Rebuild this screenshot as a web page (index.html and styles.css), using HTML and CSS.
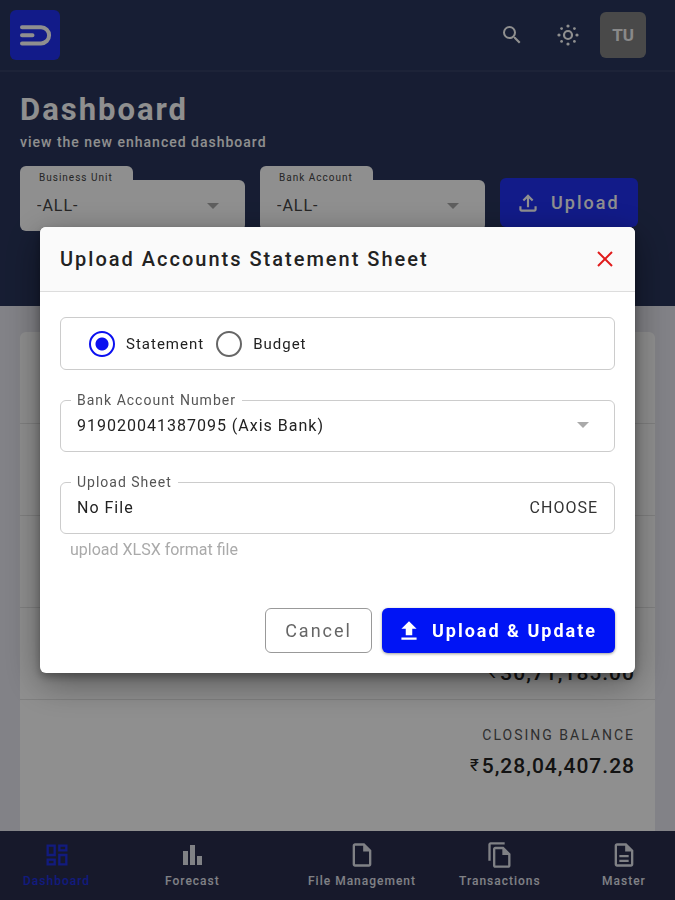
FILE: index.html
```html
<!DOCTYPE html>
<html lang="en">
<head>
<meta charset="utf-8">
<meta name="viewport" content="width=device-width, initial-scale=1">
<title>Dashboard</title>
<link rel="stylesheet" href="styles.css">
</head>
<body>
<div class="app">
  <header class="topbar">
    <a class="logo" href="#" aria-label="Home">
      <svg width="50" height="50" viewBox="0 0 50 50" fill="none" stroke="currentColor" stroke-width="4" stroke-linecap="round"><path d="M12 17.200H31a8 8 0 0 1 0 16.200H12M12 25.300H22.500"/></svg>
    </a>
    <div class="tools">
      <button class="tool" type="button" aria-label="Search">
        <svg width="24" height="24" viewBox="0 0 24 24" fill="currentColor"><path d="M15.500 14h-.79l-.28-.27A6.470 6.470 0 0 0 16 9.500 6.500 6.500 0 1 0 9.500 16c1.610 0 3.090-.59 4.230-1.570l.27.28v.79l5 4.990L20.490 19l-4.990-5zm-6 0C7.010 14 5 11.990 5 9.500S7.010 5 9.500 5 14 7.010 14 9.500 11.990 14 9.500 14z"/></svg>
      </button>
      <button class="tool" type="button" aria-label="Theme">
        <svg width="24" height="24" viewBox="0 0 24 24" fill="currentColor"><circle cx="12" cy="12" r="4" fill="none" stroke="currentColor" stroke-width="2.200"/><circle cx="12" cy="3" r="1.600"/><circle cx="12" cy="21" r="1.600"/><circle cx="3" cy="12" r="1.600"/><circle cx="21" cy="12" r="1.600"/><circle cx="5.600" cy="5.600" r="1.400"/><circle cx="18.400" cy="5.600" r="1.400"/><circle cx="5.600" cy="18.400" r="1.400"/><circle cx="18.400" cy="18.400" r="1.400"/></svg>
      </button>
      <button class="avatar" type="button">TU</button>
    </div>
  </header>
  <section class="hero">
    <h1>Dashboard</h1>
    <p>view the new enhanced dashboard</p>
    <div class="filters">
      <div class="filter">
        <label for="unit">Business Unit</label>
        <div class="filter-box">
          <select id="unit"><option>-ALL-</option></select>
          <svg class="caret" width="12" height="6" viewBox="0 0 12 6"><path d="M0 0h12L6 6z" fill="currentColor"/></svg>
        </div>
      </div>
      <div class="filter">
        <label for="account">Bank Account</label>
        <div class="filter-box">
          <select id="account"><option>-ALL-</option></select>
          <svg class="caret" width="12" height="6" viewBox="0 0 12 6"><path d="M0 0h12L6 6z" fill="currentColor"/></svg>
        </div>
      </div>
      <button class="upload" type="button">
        <svg width="26" height="26" viewBox="0 0 24 24" fill="currentColor"><path d="M18 15v3H6v-3H4v3c0 1.100.9 2 2 2h12c1.100 0 2-.9 2-2v-3h-2zM7 9l1.410 1.410L11 7.830V16h2V7.830l2.590 2.580L17 9l-5-5-5 5z"/></svg>
        Upload
      </button>
    </div>
  </section>
  <main class="content">
    <div class="card">
      <div class="row"></div>
      <div class="row"></div>
      <div class="row"></div>
      <div class="row"><strong><span class="rupee">₹</span>30,71,185.00</strong></div>
      <div class="row"><span class="caption">CLOSING BALANCE</span><strong><span class="rupee">₹</span>5,28,04,407.28</strong></div>
    </div>
  </main>
  <nav class="bottom-nav">
    <a class="active" href="#">
      <svg width="28" height="28" viewBox="0 0 24 24" fill="currentColor"><path d="M19 5v2h-4V5h4M9 5v6H5V5h4m10 8v6h-4v-6h4M9 17v2H5v-2h4M21 3h-8v6h8V3zM11 3H3v10h8V3zm10 8h-8v10h8V11zm-10 4H3v6h8v-6z"/></svg>
      Dashboard
    </a>
    <a href="#">
      <svg width="28" height="28" viewBox="0 0 28 28" fill="currentColor"><path d="M5 10h5v14H5zM12 4h5v20h-5zM19 15h5v9h-5z"/></svg>
      Forecast
    </a>
    <a href="#">
      <svg width="28" height="28" viewBox="0 0 24 24" fill="currentColor"><path d="M14 2H6c-1.100 0-2 .9-2 2v16c0 1.100.9 2 2 2h12c1.100 0 2-.9 2-2V8l-6-6zM6 20V4h7v5h5v11H6z"/></svg>
      File Management
    </a>
    <a href="#">
      <svg width="28" height="28" viewBox="0 0 24 24" fill="currentColor"><path d="M16 1H4c-1.100 0-2 .9-2 2v14h2V3h12V1zm-1 4H8c-1.100 0-2 .9-2 2v14c0 1.100.9 2 2 2h11c1.100 0 2-.9 2-2V11l-6-6zM8 21V7h6v5h5v9H8z"/></svg>
      Transactions
    </a>
    <a href="#">
      <svg width="28" height="28" viewBox="0 0 24 24" fill="currentColor"><path d="M8 16h8v2H8zm0-4h8v2H8zm6-10H6c-1.100 0-2 .9-2 2v16c0 1.100.9 2 2 2h12c1.100 0 2-.9 2-2V8l-6-6zm4 18H6V4h7v5h5v11z"/></svg>
      Master
    </a>
  </nav>
</div>

<div class="overlay">
  <form class="modal" role="dialog" aria-labelledby="modal-title">
    <div class="modal-head">
      <h2 id="modal-title">Upload Accounts Statement Sheet</h2>
      <button class="close" type="button" aria-label="Close">
        <svg width="16" height="16" viewBox="0 0 16 16" fill="none" stroke="currentColor" stroke-width="2"><path d="M1 1l14 14M15 1L1 15"/></svg>
      </button>
    </div>
    <div class="modal-body">
      <div class="choices">
        <label><input type="radio" name="kind" checked>Statement</label>
        <label><input type="radio" name="kind">Budget</label>
      </div>
      <fieldset class="field">
        <legend><label for="number">Bank Account Number</label></legend>
        <div class="field-line">
          <select id="number"><option>919020041387095 (Axis Bank)</option></select>
          <svg class="caret" width="12" height="6" viewBox="0 0 12 6"><path d="M0 0h12L6 6z" fill="currentColor"/></svg>
        </div>
      </fieldset>
      <fieldset class="field">
        <legend><label for="sheet">Upload Sheet</label></legend>
        <div class="field-line">
          <input id="sheet" type="text" value="No File" readonly>
          <button class="choose" type="button">CHOOSE</button>
        </div>
      </fieldset>
      <p class="hint">upload XLSX format file</p>
      <div class="actions">
        <button class="cancel" type="button">Cancel</button>
        <button class="submit" type="submit">
          <svg width="26" height="26" viewBox="0 0 24 24" fill="currentColor"><path d="M9 16h6v-6h4l-7-7-7 7h4zm-4 2h14v2H5z"/></svg>
          Upload &amp; Update
        </button>
      </div>
    </div>
  </form>
</div>
</body>
</html>
```

FILE: styles.css
```css
* {
  box-sizing: border-box;
}

body {
  margin: 0;
  background: #e8e8f0;
  color: #222;
  font-family: Roboto, "Liberation Sans", sans-serif;
  font-size: 16px;
  letter-spacing: 1px;
}

button,
input,
select {
  font: inherit;
  letter-spacing: inherit;
  color: inherit;
}

button {
  padding: 0;
  border: 0;
  background: none;
  cursor: pointer;
}

svg {
  display: block;
  flex: none;
}

a {
  color: inherit;
  text-decoration: none;
}

.app {
  display: flex;
  flex-direction: column;
  height: 100vh;
  overflow: hidden;
  isolation: isolate;
}

.topbar {
  display: flex;
  flex: none;
  align-items: center;
  justify-content: space-between;
  padding: 10px 29px 10px 10px;
  border-bottom: 2px solid #343f64;
  background: #29375d;
}

.logo {
  border-radius: 6px;
  background: #2030f4;
  color: #fff;
}

.tools {
  display: flex;
  align-items: center;
  gap: 32px;
  color: #fff;
}

.tool {
  width: 24px;
  height: 24px;
}

.avatar {
  width: 46px;
  height: 46px;
  margin-left: -12px;
  border-radius: 6px;
  background: #828282;
  color: #f5f5f5;
  font-size: 17px;
  font-weight: 700;
  letter-spacing: 0;
}

.hero {
  flex: none;
  padding: 20px 20px 75px;
  background: #29355b;
  color: #fff;
}

.hero h1 {
  margin: 0;
  font-size: 31px;
  line-height: 36px;
  letter-spacing: 2px;
}

.hero p {
  margin: 4px 0 14px;
  font-size: 14px;
  font-weight: 500;
  line-height: 20px;
}

.filters {
  display: flex;
  align-items: flex-end;
  gap: 15px;
}

.filter {
  display: flex;
  flex: 0 1 225px;
  flex-direction: column;
  align-items: flex-start;
  min-width: 0;
  color: #444;
}

.filter label {
  z-index: 1;
  height: 14px;
  padding: 5px 20px 0 19px;
  border-radius: 6px 6px 0 0;
  background: #fff;
  font-size: 10px;
  line-height: 14px;
}

.filter-box {
  display: flex;
  align-items: center;
  align-self: stretch;
  height: 51px;
  padding: 0 26px 0 17px;
  border-radius: 0 6px 6px 6px;
  background: #fff;
}

select {
  flex: 1;
  min-width: 0;
  padding: 0;
  border: 0;
  outline: 0;
  background: none;
  appearance: none;
}

.caret {
  color: #aaa;
}

.upload {
  display: flex;
  align-items: center;
  align-self: flex-start;
  gap: 10px;
  height: 49px;
  margin-top: 12px;
  padding: 0 18px 0 15px;
  border-radius: 6px;
  background: #2030f4;
  color: #fff;
  font-size: 18px;
  font-weight: 500;
  letter-spacing: 2px;
}

.content {
  flex: 1;
  min-height: 0;
  padding: 26px 20px 0;
}

.card {
  height: 100%;
  border-radius: 6px 6px 0 0;
  background: #fff;
}

.row {
  display: flex;
  flex-direction: column;
  align-items: flex-end;
  justify-content: flex-end;
  height: 92px;
  padding: 0 20px 12px;
}

.row:not(:last-child) {
  border-bottom: 1px solid #e4e4e4;
}

.caption {
  color: #555;
  font-size: 14px;
  line-height: 20px;
  letter-spacing: 2px;
}

.row strong {
  font-size: 21px;
  font-weight: 500;
  line-height: 28px;
  margin-top: 6px;
}

.rupee {
  font-size: 17px;
  font-weight: 400;
  vertical-align: 2px;
  margin-right: 2px;
}

.bottom-nav {
  display: grid;
  flex: none;
  grid-template-columns: 142fr 143fr 151fr 143fr 73fr;
  justify-items: start;
  padding: 10px 0 11px 23px;
  background: #292d4e;
  color: #e4e6ee;
  font-size: 12px;
  font-weight: 500;
  line-height: 16px;
}

.bottom-nav a {
  display: flex;
  flex-direction: column;
  align-items: center;
  gap: 4px;
}

.bottom-nav .active {
  color: #2030e0;
}

.overlay {
  position: fixed;
  inset: 0;
  display: flex;
  align-items: center;
  justify-content: center;
  padding: 40px;
  background: rgba(0, 0, 0, 0.44);
}

.modal {
  flex: 1;
  max-width: 600px;
  border-radius: 6px;
  background: #fff;
  box-shadow: 0 10px 36px rgba(0, 0, 0, 0.4), 0 4px 8px rgba(0, 0, 0, 0.3);
}

.modal-head {
  display: flex;
  align-items: center;
  justify-content: space-between;
  height: 65px;
  padding: 0 22px 0 20px;
  border-bottom: 1px solid #ddd;
  border-radius: 6px 6px 0 0;
  background: #fafafa;
}

.modal-head h2 {
  margin: 0;
  font-size: 20px;
  font-weight: 500;
  letter-spacing: 2px;
}

.close {
  color: #e01b1b;
}

.modal-body {
  padding: 25px 20px 20px;
}

.choices {
  display: flex;
  align-items: center;
  gap: 12px;
  height: 53px;
  padding: 0 28px;
  border: 1px solid #ccc;
  border-radius: 6px;
  font-size: 15px;
}

.choices label {
  display: flex;
  align-items: center;
  gap: 11px;
}

.choices input {
  width: 26px;
  height: 26px;
  margin: 0;
  border: 2px solid #666;
  border-radius: 50%;
  appearance: none;
}

.choices input:checked {
  border-color: #0b10f0;
  background: radial-gradient(circle, #0b10f0 6px, transparent 7px);
}

.field {
  min-width: 0;
  margin: 22px 0 0;
  padding: 0 16px 9px;
  border: 1px solid #ccc;
  border-radius: 6px;
}

.field legend {
  margin-left: -6px;
  padding: 0 6px;
  color: #555;
  font-size: 14px;
  line-height: 16px;
}

.field-line {
  display: flex;
  align-items: center;
  justify-content: space-between;
  height: 34px;
}

.field-line .caret {
  margin-right: 9px;
}

.field-line input {
  flex: 1;
  min-width: 0;
  padding: 0;
  border: 0;
  outline: 0;
  background: none;
}

.choose {
  color: #333;
}

.hint {
  margin: 6px 10px 48px;
  color: #aaa;
  line-height: 20px;
  letter-spacing: 0;
}

.actions {
  display: flex;
  justify-content: flex-end;
  gap: 10px;
}

.cancel,
.submit {
  height: 45px;
  border-radius: 6px;
  font-size: 18px;
  letter-spacing: 2px;
}

.cancel {
  padding: 0 19px;
  border: 1px solid #999;
  color: #666;
}

.submit {
  display: flex;
  align-items: center;
  gap: 10px;
  padding: 0 18px 0 14px;
  background: #0014f5;
  color: #fff;
  font-weight: 700;
  box-shadow: 0 1px 3px rgba(0, 0, 0, 0.4);
}
```
